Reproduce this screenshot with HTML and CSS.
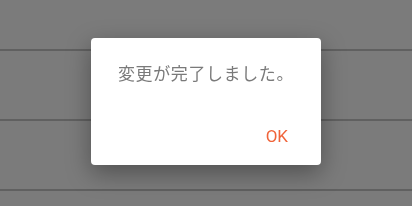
FILE: index.html
```html
<!DOCTYPE html>
<html lang="ja">

<head>
    <meta charset="UTF-8">
    <meta name="viewport" content="width=device-width, initial-scale=1.0">
    <title>変更完了</title>
    <link rel="stylesheet" href="styles.css">
</head>

<body>
    <ul class="list">
        <li class="row first"></li>
        <li class="row"></li>
        <li class="row"></li>
    </ul>

    <div class="overlay">
        <div class="dialog">
            <p class="message">変更が完了しました。</p>
            <div class="actions">
                <button class="ok-button">OK</button>
            </div>
        </div>
    </div>
</body>
</html>
```

FILE: styles.css
```css
body {
    margin: 0;
    background-color: #7b7b7b;
    font-family: Roboto, "Noto Sans CJK JP", sans-serif;
    overflow: hidden;
}

.list {
    list-style: none;
    margin: 0;
    padding: 0;
}

.row {
    height: 68px;
    border-bottom: 2px solid #606060;
}

.row.first {
    height: 49px;
}

/* Modal overlay */
.overlay {
    position: fixed;
    top: 0;
    left: 0;
    right: 0;
    bottom: 0;
    display: flex;
    align-items: center;
    justify-content: center;
}

.dialog {
    width: 230px;
    height: 127px;
    margin-top: -3px;
    background-color: #fff;
    border-radius: 4px;
    box-shadow: 0 8px 24px rgba(0, 0, 0, 0.35);
    display: flex;
    flex-direction: column;
    box-sizing: border-box;
    padding: 24px 24px 0 27px;
}

.message {
    margin: 0;
    font-size: 17px;
    line-height: 24px;
    color: #7a7a7a;
    letter-spacing: 0.6px;
}

.actions {
    margin-top: auto;
    display: flex;
    justify-content: flex-end;
    padding-bottom: 19px;
}

.ok-button {
    background: none;
    border: none;
    padding: 0;
    margin-right: 9px;
    font-family: Roboto, sans-serif;
    font-size: 17px;
    color: #f0643a;
    cursor: pointer;
}
```
